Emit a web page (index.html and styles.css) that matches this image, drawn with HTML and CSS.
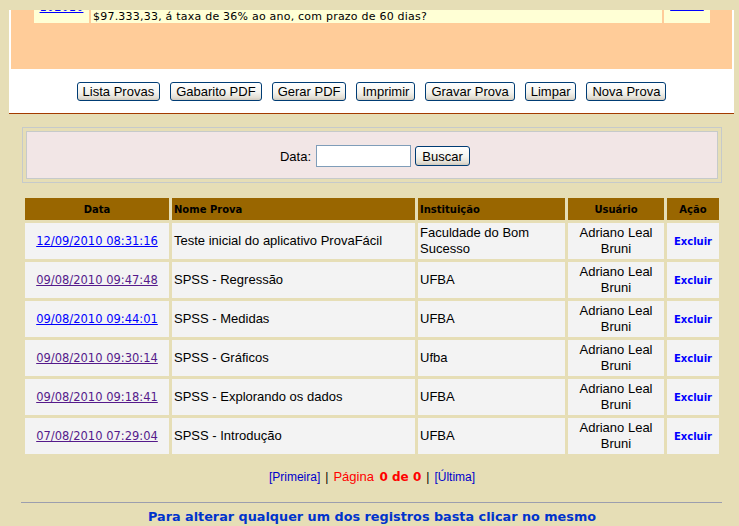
FILE: index.html
```html
<!DOCTYPE html>
<html lang="pt-BR">
<head>
<meta charset="utf-8">
<title>Lista de Provas</title>
<link rel="stylesheet" href="styles.css">
</head>
<body>
<div class="top-panel">
  <div class="peach">
    <div class="qrow">
      <div class="qcell qnum"><a href="#" class="qlink">102010</a></div>
      <div class="qcell qtext">$97.333,33, á taxa de 36% ao ano, com prazo de 60 dias?</div>
      <div class="qcell qact"><a href="#" class="qlink small">Excluir</a></div>
    </div>
  </div>
  <div class="btnbar">
    <button class="xpbtn">Lista Provas</button>
    <button class="xpbtn">Gabarito PDF</button>
    <button class="xpbtn">Gerar PDF</button>
    <button class="xpbtn">Imprimir</button>
    <button class="xpbtn">Gravar Prova</button>
    <button class="xpbtn">Limpar</button>
    <button class="xpbtn">Nova Prova</button>
  </div>
</div>

<div class="search-wrap">
  <div class="search-inner">
    <label class="search-label" for="data">Data:</label>
    <input class="search-input" id="data" type="text">
    <button class="xpbtn buscar">Buscar</button>
  </div>
</div>

<table class="grid">
  <colgroup>
    <col class="c-data"><col class="c-nome"><col class="c-inst"><col class="c-user"><col class="c-acao">
  </colgroup>
  <thead>
    <tr>
      <th class="center">Data</th>
      <th class="left">Nome Prova</th>
      <th class="left">Instituição</th>
      <th class="center">Usuário</th>
      <th class="center">Ação</th>
    </tr>
  </thead>
  <tbody>
    <tr>
      <td class="center"><a href="#" class="dlink">12/09/2010 08:31:16</a></td>
      <td>Teste inicial do aplicativo ProvaFácil</td>
      <td>Faculdade do Bom Sucesso</td>
      <td class="center">Adriano Leal Bruni</td>
      <td class="center"><a href="#" class="del">Excluir</a></td>
    </tr>
    <tr>
      <td class="center"><a href="#" class="dlink visited">09/08/2010 09:47:48</a></td>
      <td>SPSS - Regressão</td>
      <td>UFBA</td>
      <td class="center">Adriano Leal Bruni</td>
      <td class="center"><a href="#" class="del">Excluir</a></td>
    </tr>
    <tr>
      <td class="center"><a href="#" class="dlink">09/08/2010 09:44:01</a></td>
      <td>SPSS - Medidas</td>
      <td>UFBA</td>
      <td class="center">Adriano Leal Bruni</td>
      <td class="center"><a href="#" class="del">Excluir</a></td>
    </tr>
    <tr>
      <td class="center"><a href="#" class="dlink visited">09/08/2010 09:30:14</a></td>
      <td>SPSS - Gráficos</td>
      <td>Ufba</td>
      <td class="center">Adriano Leal Bruni</td>
      <td class="center"><a href="#" class="del">Excluir</a></td>
    </tr>
    <tr>
      <td class="center"><a href="#" class="dlink visited">09/08/2010 09:18:41</a></td>
      <td>SPSS - Explorando os dados</td>
      <td>UFBA</td>
      <td class="center">Adriano Leal Bruni</td>
      <td class="center"><a href="#" class="del">Excluir</a></td>
    </tr>
    <tr>
      <td class="center"><a href="#" class="dlink visited">07/08/2010 07:29:04</a></td>
      <td>SPSS - Introdução</td>
      <td>UFBA</td>
      <td class="center">Adriano Leal Bruni</td>
      <td class="center"><a href="#" class="del">Excluir</a></td>
    </tr>
  </tbody>
</table>

<div class="pager">
  <a href="#" class="plink">[Primeira]</a><span class="bar">|</span><span class="pinfo">Página <b class="pnum">0 de 0</b></span><span class="bar">|</span><a href="#" class="plink">[Última]</a>
</div>

<div class="sep"></div>

<div class="note">Para alterar qualquer um dos registros basta clicar no mesmo</div>
</body>
</html>
```

FILE: styles.css
```css
html, body {
  margin: 0;
  padding: 0;
}
body {
  background: #E6DEB6;
  font-family: "Liberation Sans", Arial, sans-serif;
  font-size: 13px;
  color: #000;
  overflow: hidden;
}

/* ---------- top panel ---------- */
.top-panel {
  margin: 10px 0 0 9px;
  width: 725px;
  box-sizing: border-box;
  padding: 0 2px;
  background: #FFFFFF;
  border-bottom: 1px solid #A33B00;
}
.peach {
  background: #FFCC99;
  height: 59px;
  padding: 0 22px 0 23px;
}
.qrow {
  display: flex;
  gap: 2px;
  height: 13px;
  overflow: hidden;
}
.qcell {
  background: #FFFFD5;
  display: flex;
  flex-direction: column;
  justify-content: flex-end;
  font-family: "DejaVu Sans", Verdana, sans-serif;
  font-size: 11.5px;
  line-height: 13px;
  white-space: nowrap;
}
.qnum {
  width: 55px;
  align-items: center;
  padding-bottom: 9px;
}
.qtext {
  width: 571px;
  box-sizing: border-box;
  padding-left: 2px;
  font-size: 11px;
  letter-spacing: 0.22px;
  line-height: 13px;
}
.qact {
  width: 46px;
  align-items: center;
  padding-bottom: 11px;
}
.qlink {
  color: #0000FF;
}
.qlink.small {
  font-size: 10px;
}

.btnbar {
  display: flex;
  justify-content: center;
  gap: 10px;
  padding: 13px 0 12px;
}

.xpbtn {
  font-family: "Liberation Sans", Arial, sans-serif;
  font-size: 13px;
  height: 19px;
  line-height: 15px;
  padding: 0 5px;
  border: 1px solid #003C74;
  border-radius: 3px;
  background: linear-gradient(#FFFFFF 0%, #F4F3EE 55%, #E3DFD5 85%, #D0CABD 100%);
  color: #000;
  cursor: pointer;
}

/* ---------- search ---------- */
.search-wrap {
  margin: 13px 0 0 22px;
  width: 700px;
  height: 56px;
  box-sizing: border-box;
  border: 1px solid #C6CACA;
  padding: 3px;
}
.search-inner {
  height: 100%;
  box-sizing: border-box;
  border: 1px solid #C6CACA;
  background: #F2E6E6;
  display: flex;
  align-items: center;
  justify-content: center;
  padding: 2px 0 0 6px;
}
.search-label {
  margin-right: 5px;
}
.search-input {
  width: 95px;
  height: 22px;
  box-sizing: border-box;
  border: 1px solid #7F9DB9;
  background: #FFFFFF;
  margin: 0 4px 0 0;
  padding: 0 2px;
}
.buscar {
  height: 20px;
  width: 55px;
  padding: 0;
}

/* ---------- grid ---------- */
.grid {
  margin: 12px 0 0 22px;
  width: 700px;
  table-layout: fixed;
  border-collapse: separate;
  border-spacing: 3px;
}
.c-data { width: 144px; }
.c-nome { width: 243px; }
.c-inst { width: 147px; }
.c-user { width: 96px; }
.c-acao { width: 52px; }

.grid th {
  background: #996600;
  height: 22px;
  padding: 0 2px;
  font-family: "DejaVu Sans", Verdana, sans-serif;
  font-weight: bold;
  font-size: 10px;
  color: #000;
  box-sizing: border-box;
}
.grid td {
  background: #F3F3F3;
  height: 36px;
  box-sizing: border-box;
  padding: 2px;
  line-height: 16px;
  vertical-align: middle;
}
.left { text-align: left; }
.center { text-align: center; }

.dlink {
  font-family: "DejaVu Sans", Verdana, sans-serif;
  font-size: 11.5px;
  color: #0000FF;
}
.dlink.visited {
  color: #551A8B;
}
.del {
  font-family: "DejaVu Sans", Verdana, sans-serif;
  font-size: 10px;
  font-weight: bold;
  color: #0000FF;
  text-decoration: none;
}

/* ---------- pager ---------- */
.pager {
  margin: 12px 0 0 0;
  width: 744px;
  text-align: center;
  font-size: 12px;
  line-height: 15px;
}
.plink {
  color: #0000CC;
  text-decoration: none;
}
.bar {
  margin: 0 5px;
}
.pinfo {
  color: #FF0000;
  font-size: 13px;
}
.pnum {
  font-family: "DejaVu Sans", Verdana, sans-serif;
  font-size: 12px;
  margin-left: 2px;
}

.sep {
  margin: 17px 0 0 21px;
  width: 701px;
  height: 1px;
  background: #9C9EAE;
}

.note {
  width: 744px;
  text-align: center;
  margin-top: 6px;
  font-family: "DejaVu Sans", Verdana, sans-serif;
  font-weight: bold;
  font-size: 12.8px;
  color: #0033CC;
}
```
